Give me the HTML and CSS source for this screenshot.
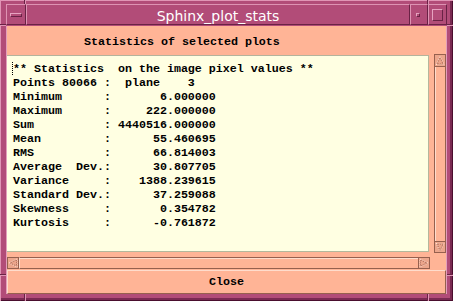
FILE: index.html
```html
<!DOCTYPE html>
<html>
<head>
<meta charset="utf-8">
<link rel="stylesheet" href="styles.css">
</head>
<body>
<div class="win">
  <div class="titlebar">
    <div class="tbtn menu"><span class="bar"></span></div>
    <div class="title">Sphinx_plot_stats</div>
    <div class="tbtn min"><span class="dot"></span></div>
    <div class="tbtn max"><span class="sq"></span></div>
  </div>
  <div class="main">
    <div class="header">Statistics of selected plots</div>
    <div class="body">
<pre class="text"><span class="cursor"></span>** Statistics  on the image pixel values **
Points 80066 :  plane    3
Minimum      :       6.000000
Maximum      :     222.000000
Sum          : 4440516.000000
Mean         :      55.460695
RMS          :      66.814003
Average  Dev.:      30.807705
Variance     :    1388.239615
Standard Dev.:      37.259088
Skewness     :       0.354782
Kurtosis     :      -0.761872</pre>
      <div class="vsb">
        <div class="arrow up"><svg width="10" height="11" viewBox="0 0 10 11"><polygon points="5,1.5 9,9.5 1,9.5" class="tri-l"/><polygon points="5,2.5 8,9 2,9" class="tri-d"/></svg></div>
        <div class="trough"></div>
        <div class="arrow down"><svg width="10" height="10" viewBox="0 0 10 10"><polygon points="1,1.5 9,1.5 5,9" class="tri-l"/><polygon points="2,2 8,2 5,8.5" class="tri-d"/></svg></div>
      </div>
    </div>
    <div class="hsb">
      <div class="arrow left"><svg width="10" height="10" viewBox="0 0 10 10"><polygon points="1,5 9,1 9,9" class="tri-l"/><polygon points="2,5 8.5,2 8.5,8" class="tri-d"/></svg></div>
      <div class="htrough"></div>
      <div class="arrow right"><svg width="10" height="10" viewBox="0 0 10 10"><polygon points="1,1 9,5 1,9" class="tri-l"/><polygon points="1.5,2 8,5 1.5,8" class="tri-d"/></svg></div>
    </div>
    <div class="close">Close</div>
  </div>
  <span class="gv g1"></span>
  <span class="gv g2"></span>
  <span class="gv g3"></span>
  <span class="gv g4"></span>
  <span class="gh g5"></span>
  <span class="gh g6"></span>
  <span class="gh g7"></span>
  <span class="gh g8"></span>
</div>
</body>
</html>
```
FILE: styles.css
```css
html, body {
  margin: 0;
  padding: 0;
  background: #b24c78;
}

.win {
  position: relative;
  width: 453px;
  height: 301px;
  box-sizing: border-box;
  padding: 4px 6px 7px 6px;
  background: #b24c78;
  box-shadow: inset 1px 1px 0 #e095b5, inset -1px -1px 0 #4a0e2e, inset -3px -3px 0 #7a2a52;
  display: flex;
  flex-direction: column;
}

.titlebar {
  display: flex;
  height: 21px;
}

.tbtn, .title {
  box-sizing: border-box;
  height: 21px;
  background: #b24c78;
  border-top: 1px solid #de93b3;
  border-left: 1px solid #de93b3;
  border-right: 1px solid #6a2245;
  border-bottom: 1px solid #6a2245;
  display: flex;
  align-items: center;
  justify-content: center;
}

.menu { width: 20px; }
.min { width: 18px; }
.max { width: 19px; }

.title {
  width: 384px;
  align-items: flex-start;
  padding-top: 3px;
  color: #ffffff;
  font-family: "DejaVu Sans", sans-serif;
  font-size: 14px;
  line-height: 16px;
}

.bar {
  box-sizing: border-box;
  width: 12px;
  height: 4px;
  border-top: 1px solid #e6a3c0;
  border-left: 1px solid #e6a3c0;
  border-right: 1px solid #6a2245;
  border-bottom: 1px solid #6a2245;
  margin-top: 1px;
}

.dot {
  box-sizing: border-box;
  width: 4px;
  height: 4px;
  border-top: 1px solid #e6a3c0;
  border-left: 1px solid #e6a3c0;
  border-right: 1px solid #6a2245;
  border-bottom: 1px solid #6a2245;
  margin-left: -2px;
  margin-top: 1px;
}

.sq {
  box-sizing: border-box;
  width: 11px;
  height: 12px;
  border-top: 1px solid #e6a3c0;
  border-left: 1px solid #e6a3c0;
  border-right: 1px solid #6a2245;
  border-bottom: 1px solid #6a2245;
}

.main {
  margin-top: 1px;
  height: 268px;
  box-sizing: border-box;
  border-left: 1px solid #e39ebb;
  border-right: 1px solid #e39ebb;
  background: #ffb496;
  display: flex;
  flex-direction: column;
  font-family: "Liberation Mono", monospace;
  font-weight: bold;
  font-size: 11.67px;
  color: #000;
}

.header {
  height: 28px;
  box-sizing: border-box;
  padding: 4px 0 0 77px;
  line-height: 24px;
}

.body {
  display: flex;
  gap: 5px;
  height: 199px;
}

.text {
  box-sizing: border-box;
  width: 422px;
  height: 197px;
  margin: 1px 0;
  padding: 6px 0 0 6px;
  background: #ffffe2;
  border-top: 1px solid #b4b49c;
  border-right: 1px solid #b4b89c;
  border-bottom: 1px solid #b4b89c;
  font: inherit;
  line-height: 14px;
  white-space: pre;
  overflow: hidden;
}

.cursor {
  display: inline-block;
  width: 0;
  height: 13px;
  margin-left: -1px;
  border-left: 1px dotted #000;
  vertical-align: -3px;
}

.vsb {
  width: 12px;
  height: 199px;
  display: flex;
  flex-direction: column;
}

.arrow {
  box-sizing: border-box;
  width: 12px;
  height: 12px;
  background: #eca68c;
  border: 1px solid #96604e;
  display: flex;
  align-items: center;
  justify-content: center;
}

.arrow.up { height: 13px; }

.trough {
  flex: 1;
  box-sizing: border-box;
  border-left: 1px solid #96604e;
  border-right: 1px solid #96604e;
  box-shadow: inset 1px 0 0 #ffdccc;
}

.tri-l {
  fill: none;
  stroke: #ffe2d4;
  stroke-width: 1;
  stroke-dasharray: 1 1;
}

.tri-d {
  fill: none;
  stroke: #a86450;
  stroke-width: 1;
  stroke-dasharray: 1 1;
  stroke-dashoffset: 1;
}

.hsb {
  margin-top: 4px;
  width: 423px;
  height: 12px;
  display: flex;
}

.htrough {
  flex: 1;
  box-sizing: border-box;
  border-top: 1px solid #96604e;
  border-bottom: 1px solid #96604e;
  border-left: 1px solid #ffdccc;
  box-shadow: inset 0 1px 0 #ffdccc;
}

.close {
  margin-top: 1px;
  height: 24px;
  box-sizing: border-box;
  border-top: 1px solid #ffdccc;
  border-left: 1px solid #ffdccc;
  border-right: 1px solid #96604e;
  border-bottom: 1px solid #96604e;
  padding-top: 1px;
  line-height: 21px;
  text-align: center;
}

.gv {
  position: absolute;
  width: 1px;
  border-left: 1px solid #6a2245;
  border-right: 1px solid #e095b5;
  box-sizing: border-box;
  width: 2px;
}

.gh {
  position: absolute;
  height: 2px;
  box-sizing: border-box;
  border-top: 1px solid #6a2245;
  border-bottom: 1px solid #e095b5;
}

.g1 { left: 24px; top: 0; height: 4px; }
.g2 { left: 427px; top: 0; height: 4px; }
.g3 { left: 24px; top: 294px; height: 7px; }
.g4 { left: 427px; top: 294px; height: 7px; }
.g5 { left: 0; top: 24px; width: 6px; }
.g6 { left: 447px; top: 24px; width: 6px; }
.g7 { left: 0; top: 274px; width: 6px; }
.g8 { left: 447px; top: 274px; width: 6px; }
```
